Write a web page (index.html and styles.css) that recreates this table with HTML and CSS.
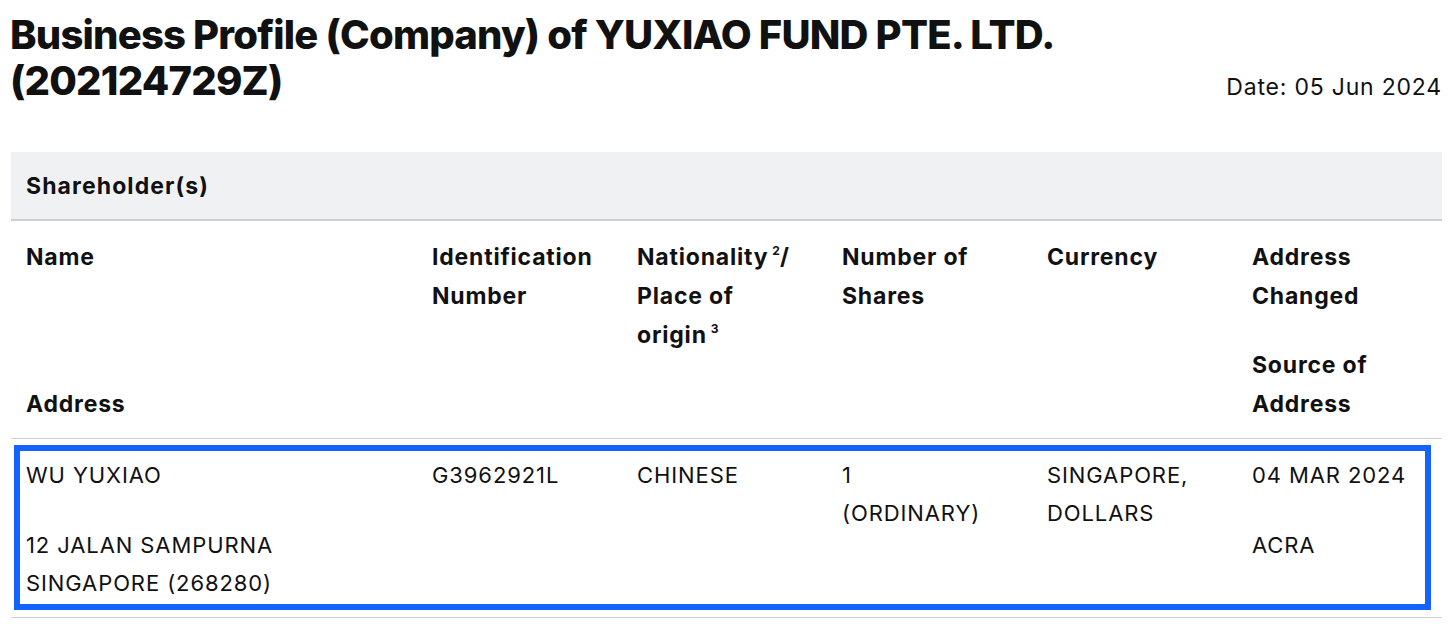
FILE: index.html
```html
<!DOCTYPE html>
<html lang="en">
<head>
<meta charset="utf-8">
<title>Business Profile</title>
<link rel="stylesheet" href="styles.css">
</head>
<body>
<header class="top">
  <h1 class="title">Business Profile (Company) of YUXIAO FUND PTE. LTD. (202124729Z)</h1>
  <div class="date">Date: 05 Jun 2024</div>
</header>
<section class="section">
  <div class="band">Shareholder(s)</div>
  <div class="grid head">
    <div class="cell split">
      <div>Name</div>
      <div>Address</div>
    </div>
    <div class="cell">Identification Number</div>
    <div class="cell">Nationality<sup>2</sup>/<br>Place of<br>origin<sup>3</sup></div>
    <div class="cell">Number of Shares</div>
    <div class="cell">Currency</div>
    <div class="cell split">
      <div>Address Changed</div>
      <div class="gap">Source of Address</div>
    </div>
  </div>
  <div class="row">
    <div class="highlight">
      <div class="grid body">
        <div class="cell">
          <div>WU YUXIAO</div>
          <div class="gap">12 JALAN SAMPURNA<br>SINGAPORE (268280)</div>
        </div>
        <div class="cell">G3962921L</div>
        <div class="cell">CHINESE</div>
        <div class="cell">1<br>(ORDINARY)</div>
        <div class="cell">SINGAPORE,<br>DOLLARS</div>
        <div class="cell">
          <div>04 MAR 2024</div>
          <div class="gap">ACRA</div>
        </div>
      </div>
    </div>
  </div>
</section>
</body>
</html>
```
FILE: styles.css
```css
* { box-sizing: border-box; }
body {
  margin: 0;
  padding: 12px 14px 0 11px;
  font-family: Inter, "Noto Sans", sans-serif;
  color: #111;
  background: #fff;
}
.top {
  display: flex;
  justify-content: space-between;
  align-items: flex-end;
}
.title {
  margin: 0 0 0 -1px;
  font-size: 40px;
  line-height: 46px;
  font-weight: 800;
  letter-spacing: -0.8px;
  max-width: 1100px;
}
.date {
  font-size: 23px;
  line-height: 30px;
  letter-spacing: 0.8px;
  padding-bottom: 2px;
}
.section {
  margin-top: 48px;
}
.band {
  height: 69px;
  background: #f0f1f3;
  border-bottom: 2px solid #cfcfcf;
  display: flex;
  align-items: center;
  padding-left: 15px;
  font-size: 23px;
  font-weight: 700;
  letter-spacing: 1.1px;
}
.grid {
  display: grid;
  grid-template-columns: 406px 205px 205px 205px 205px 1fr;
}
.head {
  padding: 17px 0 14px 15px;
  border-bottom: 1px solid #cfcfcf;
  font-size: 23px;
  line-height: 39px;
  font-weight: 700;
  letter-spacing: 0.8px;
}
.cell { padding-right: 8px; }
.split {
  display: flex;
  flex-direction: column;
  justify-content: space-between;
}
.head .gap { margin-top: 30px; }
sup {
  font-size: 12px;
  line-height: 0;
  vertical-align: 10px;
  margin-left: 4px;
  letter-spacing: 0;
}
.row {
  padding: 6px 11px 7px 3px;
  border-bottom: 1px solid #cfcfcf;
}
.highlight {
  border: 6px solid #1463ff;
  padding: 5px 0 2px 6px;
}
.body {
  font-size: 22px;
  line-height: 38px;
  font-weight: 400;
  letter-spacing: 0.9px;
}
.body .gap { margin-top: 32px; }
```
